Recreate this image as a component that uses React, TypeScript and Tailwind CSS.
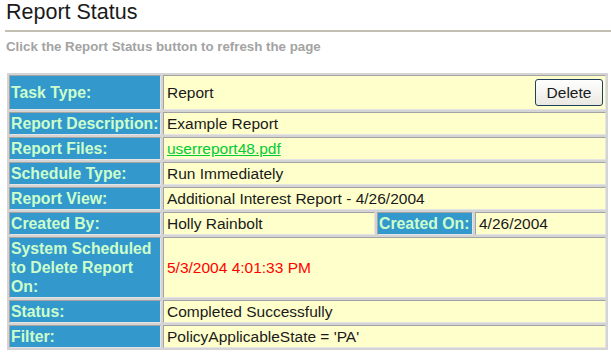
import type { ReactNode } from 'react'
import clsx from 'clsx'

const cell =
  'border border-t-[#a3a3a3] border-l-[#a3a3a3] border-r-[#e4e4e4] border-b-[#e4e4e4] py-px align-middle'

function Label({ children, wrap }: { children: ReactNode; wrap?: boolean }) {
  return (
    <td
      className={clsx(
        cell,
        'bg-[#3399cc] pl-px pr-0 text-[15.8px] font-bold text-[#ccffcc]',
        !wrap && 'whitespace-nowrap',
      )}
    >
      {children}
    </td>
  )
}

function Value({ children, colSpan, className }: { children: ReactNode; colSpan?: number; className?: string }) {
  return (
    <td colSpan={colSpan} className={clsx(cell, 'bg-[#ffffcc] pl-[3px] pr-[2px] text-[#1a1a1a]', className)}>
      {children}
    </td>
  )
}

export default function App() {
  return (
    <div className="min-h-screen bg-white font-['Liberation_Sans',Arial,Helvetica,sans-serif]">
      <h1 className="pl-[6px] text-[21.5px] leading-[24px] font-normal text-[#1a1a1a]">Report Status</h1>
      <div className="ml-[5px] mt-[6px] h-[2px] bg-[#c3bfb3]" />
      <p className="mt-[7px] pl-[6px] text-[13.3px] leading-[16px] font-bold text-[#a3a3a3]">
        Click the Report Status button to refresh the page
      </p>

      <table className="mt-[18px] ml-[7px] w-[601px] table-fixed border-separate border-spacing-[2px] bg-[#d4d4d4] text-[15.5px] leading-[19px]">
        <colgroup>
          <col className="w-[152px]" />
          <col className="w-[212px]" />
          <col className="w-[96px]" />
          <col className="w-[131px]" />
        </colgroup>
        <tbody>
          <tr>
            <Label>Task Type:</Label>
            <Value colSpan={3}>
              <div className="flex items-center justify-between">
                <span>Report</span>
                <button className="my-[2px] h-[27px] w-[68px] rounded-[3px] border border-[#1f3f5f] bg-linear-to-b from-white to-[#e9e8e2] text-[15.5px] text-[#1a1a1a]">
                  Delete
                </button>
              </div>
            </Value>
          </tr>
          <tr>
            <Label>Report Description:</Label>
            <Value colSpan={3}>Example Report</Value>
          </tr>
          <tr>
            <Label>Report Files:</Label>
            <Value colSpan={3}>
              <a href="#" className="text-[#00cc33] underline">
                userreport48.pdf
              </a>
            </Value>
          </tr>
          <tr>
            <Label>Schedule Type:</Label>
            <Value colSpan={3}>Run Immediately</Value>
          </tr>
          <tr>
            <Label>Report View:</Label>
            <Value colSpan={3}>Additional Interest Report - 4/26/2004</Value>
          </tr>
          <tr>
            <Label>Created By:</Label>
            <Value>Holly Rainbolt</Value>
            <Label>Created On:</Label>
            <Value>4/26/2004</Value>
          </tr>
          <tr>
            <Label wrap>System Scheduled to Delete Report On:</Label>
            <Value colSpan={3} className="text-[#ff0000]">
              5/3/2004 4:01:33 PM
            </Value>
          </tr>
          <tr>
            <Label>Status:</Label>
            <Value colSpan={3}>Completed Successfully</Value>
          </tr>
          <tr>
            <Label>Filter:</Label>
            <Value colSpan={3}>PolicyApplicableState = 'PA'</Value>
          </tr>
        </tbody>
      </table>
    </div>
  )
}
